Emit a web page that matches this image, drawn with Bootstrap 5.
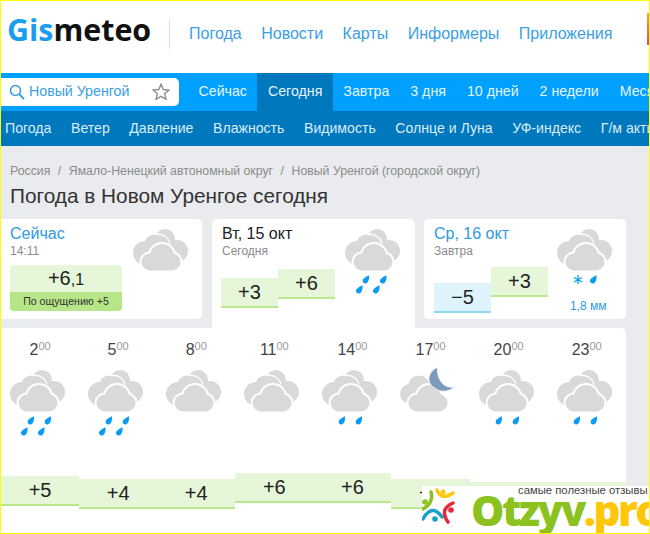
<!DOCTYPE html>
<html lang="ru">
<head>
  <meta charset="UTF-8">
  <meta name="viewport" content="width=device-width, initial-scale=1.0">
  <title>Погода в Новом Уренгое сегодня</title>
  <link href="https://cdn.jsdelivr.net/npm/bootstrap@5.3.0/dist/css/bootstrap.min.css" rel="stylesheet">
  <style>
    body { background: #fff; font-family: "Liberation Sans", Arial, sans-serif; color: #333; }
    .frame { width: 650px; height: 534px; border: 1px solid #ff0; overflow: hidden; position: relative; background: #e9ebee; }
    a { text-decoration: none; }

    .top-head { height: 72px; background: #fff; padding-bottom: 6px; }
    .logo-txt { width: 168px; padding-left: 6px; margin-bottom: 7px; font-family: "Open Sans", sans-serif; font-weight: 700; font-size: 30.400px; line-height: 1; color: #111; white-space: nowrap; }
    .logo-txt b { color: #1a9df0; font-weight: 700; }
    .head-div { width: 1px; height: 30px; background: #ddd; }
    .head-links a { font-size: 16px; color: #3c9ee2; white-space: nowrap; }
    .head-links { gap: 19.500px; padding-left: 19px; }
    .head-edge { width: 2px; height: 32px; background: linear-gradient(#f7a13c, #ef3f7c); position: absolute; right: 0; top: 12px; }

    .tab-bar { height: 38px; background: #00a0ff; overflow: hidden; }
    .search-box { width: 178px; height: 28px; background: #fff; border-radius: 0 5px 5px 0; padding-left: 8px; padding-right: 9px; color: #3c9ee2; font-size: 14.200px; flex: none; margin-right: 9px; }
    .search-box .star-ico { margin-top: -2px; }
    .tab-bar a { font-size: 14.200px; line-height: 37px; padding: 0 10.500px 1px; color: #e6f5ff; white-space: nowrap; }
    .tab-bar a.cur { background: #0078bd; }
    .sub-bar { height: 35px; background: #0078bd; overflow: hidden; padding-left: 4px; gap: 19.600px; }
    .sub-bar a { font-size: 14.100px; color: #d9edf9; white-space: nowrap; }

    .crumbs { padding: 18px 0 0 9px; font-size: 12.300px; line-height: 15px; color: #8b8b8b; white-space: nowrap; }
    .crumbs i { font-style: normal; padding: 0 7.500px; }
    .page-ttl { font-size: 20.800px; line-height: 24px; font-weight: 400; color: #333; margin: 5px 0 11px 9px; }

    .day-row { height: 109px; }
    .day-card { height: 100px; background: #fff; border-radius: 5px; position: relative; padding: 5px 0 0 10px; }
    .day-card.now { width: 201px; border-radius: 0 5px 5px 0; padding-left: 9px; margin-right: 10px; }
    .day-card.today { width: 203px; height: 112px; margin-right: 9px; }
    .day-card.tom { width: 202px; }
    .day-ttl { font-size: 16px; line-height: 19px; color: #222; }
    .day-ttl.blu { color: #2d9ae6; }
    .day-sub { font-size: 12px; line-height: 15px; margin-top: 1px; color: #8b8b8b; }
    .day-card > svg { position: absolute; top: 10px; overflow: visible; }
    .now-box { width: 112px; margin-top: 6px; border-radius: 4px; overflow: hidden; background: #e6f6d9; text-align: center; }
    .now-temp { height: 27px; font-size: 20px; line-height: 27px; color: #222; }
    .now-temp span { font-size: 16px; }
    .now-feel { height: 19px; background: #b6e688; font-size: 10.600px; line-height: 19px; color: #333; }
    .day-bars { position: absolute; left: 9px; top: 48px; }
    .tom .day-bars { left: 10px; }
    .temp-bar { height: 30px; background: #e6f6d9; border-bottom: 2px solid #b9e98c; font-size: 20px; line-height: 28px; color: #222; text-align: center; }
    .temp-bar.cold { background: #dff3fd; border-bottom-color: #8ed8f6; }
    .day-bars .temp-bar { width: 57px; }
    .mm-txt { position: absolute; left: 146px; top: 80px; font-size: 12px; line-height: 15px; color: #2d9ae6; }

    .hours-panel { width: 625px; height: 210px; background: #fff; border-radius: 0 5px 0 0; display: grid; grid-template-columns: repeat(8, 78.100px); padding-top: 11px; position: relative; }
    .hour-lbl { font-size: 16px; line-height: 22px; color: #444; text-align: center; }
    .hour-lbl sup { font-size: 11px; color: #999; top: -.5em; }
    .hour-ico { display: block; margin: 9px 0 0 9px; overflow: visible; }

    .otz-over { position: absolute; left: 421px; top: 485px; right: 0; bottom: 0; background: #fff; overflow: hidden; }
    .otz-over svg { position: absolute; left: 0; top: 0; }
    .otz-slog { position: absolute; left: 96px; top: -3px; font-size: 11.300px; line-height: 15px; color: #444; white-space: nowrap; }
    .otz-name { position: absolute; left: 49px; top: -1px; font-family: "Open Sans", sans-serif; font-weight: 800; font-size: 42px; line-height: 50px; letter-spacing: -2.500px; color: #8cc21f; white-space: nowrap; }
    .otz-name b { color: #ffc60a; font-weight: 800; }
  </style>
</head>
<body class="m-0">

<svg width="0" height="0" class="position-absolute">
  <symbol id="ic-cloud" viewBox="0 0 55 42">
    <g fill="#d9d9d9">
      <circle cx="12" cy="24" r="12"/><circle cx="21" cy="15" r="9.500"/><circle cx="32" cy="10" r="10"/><circle cx="44" cy="22" r="11"/>
      <rect x="10" y="20" width="32" height="14"/>
    </g>
    <path d="M23 5.500a12 12 0 0 1 14 9" fill="none" stroke="#fff" stroke-width="1.300"/>
    <g fill="#fff" stroke="#fff" stroke-width="4">
      <circle cx="17" cy="33" r="8.500"/><circle cx="29" cy="27" r="12"/><circle cx="39" cy="33" r="8.500"/>
    </g>
    <g fill="#d9d9d9">
      <circle cx="17" cy="33" r="8.500"/><circle cx="29" cy="27" r="12"/><circle cx="39" cy="33" r="8.500"/>
      <rect x="17" y="30" width="22" height="11.500"/>
    </g>
  </symbol>
  <symbol id="ic-cloud-part" viewBox="0 0 55 42">
    <g fill="#d9d9d9">
      <circle cx="10" cy="24" r="10"/><circle cx="19" cy="16" r="10.500"/><circle cx="29" cy="20" r="9"/>
    </g>
    <g fill="#fff" stroke="#fff" stroke-width="4">
      <circle cx="17" cy="33" r="8.500"/><circle cx="29" cy="27" r="12"/><circle cx="39" cy="33" r="8.500"/>
    </g>
    <g fill="#d9d9d9">
      <circle cx="17" cy="33" r="8.500"/><circle cx="29" cy="27" r="12"/><circle cx="39" cy="33" r="8.500"/>
      <rect x="17" y="30" width="22" height="11.500"/>
    </g>
  </symbol>
  <symbol id="ic-drop" viewBox="0 0 7 9">
    <path d="M6.500.2C6.800 3 6.300 5.500 5.200 7A2.900 2.900 0 0 1 .8 7.800 2.900 2.900 0 0 1 1 3.800C2.500 2.200 4.500 1 6.500.2Z" fill="#0a9bf5"/>
  </symbol>
</svg>

<div class="frame">
  <div class="top-head d-flex align-items-center position-relative">
    <div class="logo-txt"><b>Gis</b>meteo</div>
    <div class="head-div"></div>
    <div class="head-links d-flex">
      <a href="#">Погода</a><a href="#">Новости</a><a href="#">Карты</a><a href="#">Информеры</a><a href="#">Приложения</a>
    </div>
    <div class="head-edge"></div>
  </div>

  <div class="tab-bar d-flex align-items-center">
    <div class="search-box d-flex align-items-center">
      <svg width="16" height="16" viewBox="0 0 16 16" class="me-1 flex-shrink-0"><circle cx="6.500" cy="6.500" r="5" fill="none" stroke="#3c9ee2" stroke-width="1.600"/><path d="M10.200 10.200 15 15" stroke="#3c9ee2" stroke-width="1.800"/></svg>
      <span>Новый Уренгой</span>
      <svg width="18" height="17" viewBox="0 0 18 17" class="star-ico ms-auto flex-shrink-0"><path d="M9 1.200l2.300 5.300 5.700.5-4.300 3.800 1.300 5.600L9 13.400l-5 3 1.300-5.600L1 7l5.700-.5z" fill="none" stroke="#8f8f8f" stroke-width="1.400"/></svg>
    </div>
    <a href="#">Сейчас</a><a href="#" class="cur">Сегодня</a><a href="#">Завтра</a><a href="#">3 дня</a><a href="#">10 дней</a><a href="#">2 недели</a><a href="#">Месяц</a>
  </div>

  <div class="sub-bar d-flex align-items-center">
    <a href="#">Погода</a><a href="#">Ветер</a><a href="#">Давление</a><a href="#">Влажность</a><a href="#">Видимость</a><a href="#">Солнце и Луна</a><a href="#">УФ-индекс</a><a href="#">Г/м активность</a>
  </div>

  <div class="crumbs">Россия<i>/</i>Ямало-Ненецкий автономный округ<i>/</i>Новый Уренгой (городской округ)</div>
  <h1 class="page-ttl">Погода в Новом Уренгое сегодня</h1>

  <div class="day-row d-flex align-items-start">
    <div class="day-card now">
      <div class="day-ttl blu">Сейчас</div>
      <div class="day-sub">14:11</div>
      <div class="now-box">
        <div class="now-temp">+6<span>,1</span></div>
        <div class="now-feel">По ощущению +5</div>
      </div>
      <svg width="55" height="42" style="left:132px"><use href="#ic-cloud"/></svg>
    </div>
    <div class="day-card today">
      <div class="day-ttl">Вт, 15 окт</div>
      <div class="day-sub">Сегодня</div>
      <div class="day-bars d-flex align-items-start">
        <div class="temp-bar" style="margin-top:11px">+3</div>
        <div class="temp-bar" style="margin-top:2px">+6</div>
      </div>
      <svg width="55" height="66" style="left:133px">
        <use href="#ic-cloud" width="55" height="42"/>
        <use href="#ic-drop" x="11" y="56" width="7" height="9"/><use href="#ic-drop" x="17.500" y="46" width="7" height="9"/>
        <use href="#ic-drop" x="28" y="56" width="7" height="9"/><use href="#ic-drop" x="35" y="46" width="7" height="9"/>
      </svg>
    </div>
    <div class="day-card tom">
      <div class="day-ttl blu">Ср, 16 окт</div>
      <div class="day-sub">Завтра</div>
      <div class="day-bars d-flex align-items-start">
        <div class="temp-bar cold" style="margin-top:16px">−5</div>
        <div class="temp-bar">+3</div>
      </div>
      <svg width="55" height="66" style="left:133px">
        <use href="#ic-cloud" width="55" height="42"/>
        <path d="M21 46v9M17 48.500l8 4.500M25 48.500l-8 4.500" stroke="#0a9bf5" stroke-width="1.300" fill="none"/>
        <use href="#ic-drop" x="33" y="46" width="7" height="9"/>
      </svg>
      <div class="mm-txt">1,8 мм</div>
    </div>
  </div>

  <div class="hours-panel" id="hoursPanel"></div>

  <div class="otz-over">
    <svg width="36" height="46" viewBox="0 0 36 46" fill="none" stroke-linecap="round">
      <path d="M15 4Q19 15 31 7" stroke="#ffc60a" stroke-width="3.500"/><circle cx="21" cy="6" r="2.500" fill="#ffc60a"/>
      <path d="M9 6Q12 17 1 23" stroke="#8cc21f" stroke-width="3.500"/><circle cx="3" cy="16" r="2.800" fill="#8cc21f"/>
      <path d="M1 33Q10 17 20 31" stroke="#19a0c8" stroke-width="3.500"/><circle cx="13" cy="33" r="2.800" fill="#19a0c8"/>
      <path d="M31 17Q17 23 26 36" stroke="#e8263a" stroke-width="3.500"/><circle cx="29" cy="24" r="2.800" fill="#e8263a"/>
    </svg>
    <div class="otz-slog">самые полезные отзывы</div>
    <div class="otz-name">Otzyv<b>.pro</b></div>
  </div>
</div>

<script>
  // hourly forecast: hour, temperature, bar offset from the icon, rain level
  const hours = [
    { h: 2, t: '+5', top: 40, rain: 2 },
    { h: 5, t: '+4', top: 43, rain: 2 },
    { h: 8, t: '+4', top: 43, rain: 0 },
    { h: 11, t: '+6', top: 37, rain: 0 },
    { h: 14, t: '+6', top: 37, rain: 1 },
    { h: 17, t: '+4', top: 43, rain: 0, moon: true },
    { h: 20, t: '+3', top: 46, rain: 1 },
    { h: 23, t: '+3', top: 46, rain: 1 }
  ];
  const drop = (x, y) => `<use href="#ic-drop" x="${x}" y="${y}" width="7" height="9"/>`;
  const heavy = drop(11, 57) + drop(17.5, 46) + drop(28, 57) + drop(34.5, 46);
  const light = drop(16.5, 46) + drop(33.5, 46);
  const moon = '<path d="M37.500-3C26.500 3 26.500 13 34.500 18 40.500 23 48.500 22 54.500 17 43.500 19 36.500 9 37.500-3Z" fill="#7c9bbd" stroke="#fff" stroke-width=".8"/>';

  const panel = document.getElementById('hoursPanel');
  hours.forEach((item) => {
    const col = document.createElement('div');
    const drops = item.rain === 2 ? heavy : item.rain === 1 ? light : '';
    const cloud = item.moon ? '#ic-cloud-part' : '#ic-cloud';
    col.innerHTML = `<div class="hour-lbl">${item.h}<sup>00</sup></div>
      <svg class="hour-ico" width="58" height="66" viewBox="0 0 58 66"><use href="${cloud}" width="55" height="42"/>${item.moon ? moon : ''}${drops}</svg>
      <div class="temp-bar" style="margin-top:${item.top}px">${item.t}</div>`;
    panel.appendChild(col);
  });
</script>
<script src="https://cdn.jsdelivr.net/npm/bootstrap@5.3.0/dist/js/bootstrap.bundle.min.js"></script>
</body>
</html>
